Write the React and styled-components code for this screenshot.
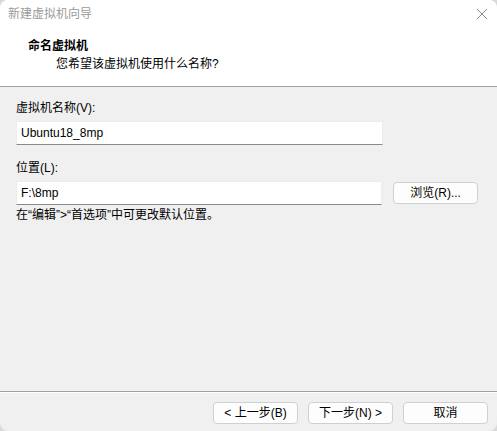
import React from "react";
import styled, { createGlobalStyle } from "styled-components";

const FONT = `"Liberation Sans", "Noto Sans CJK SC", sans-serif`;

const GlobalStyle = createGlobalStyle`
  html, body {
    margin: 0;
    padding: 0;
    background: #d9d9d9;
  }
  * {
    box-sizing: border-box;
  }
`;

const App = () => {
  return (
    <>
      <GlobalStyle />
      <Window>
        <Header>
          <TitleBar>
            <TitleText>新建虚拟机向导</TitleText>
            <CloseButton>
              <svg width="12" height="12" viewBox="0 0 12 12">
                <path d="M1 1 L11 11 M11 1 L1 11" stroke="#8a8a8a" strokeWidth="1" />
              </svg>
            </CloseButton>
          </TitleBar>
          <HeaderContent>
            <StepTitle>命名虚拟机</StepTitle>
            <StepSubtitle>您希望该虚拟机使用什么名称?</StepSubtitle>
          </HeaderContent>
        </Header>
        <Body>
          <Label>虚拟机名称(V):</Label>
          <Field>
            <TextInput defaultValue="Ubuntu18_8mp" />
          </Field>
          <Label $top={15}>位置(L):</Label>
          <Field>
            <TextInput defaultValue="F:\8mp" />
            <Button $width={85}>浏览(R)...</Button>
          </Field>
          <Hint>在“编辑”&gt;“首选项”中可更改默认位置。</Hint>
        </Body>
        <Footer>
          <Button $width={85}>&lt; 上一步(B)</Button>
          <Button $width={85}>下一步(N) &gt;</Button>
          <Button $width={85}>取消</Button>
        </Footer>
      </Window>
    </>
  );
};

export default App;

const Window = styled.div`
  width: 497px;
  height: 431px;
  background: #f0f0f0;
  border-radius: 8px;
  overflow: hidden;
  display: flex;
  flex-direction: column;
  font-family: ${FONT};
  font-size: 12px;
  color: #000;
`;

const Header = styled.div`
  background: #fff;
  height: 87px;
  border-bottom: 1px solid #a0a0a0;
`;

const TitleBar = styled.div`
  height: 30px;
  display: flex;
  align-items: center;
  justify-content: space-between;
  padding: 0 7px 2px 8px;
`;

const TitleText = styled.div`
  color: #9a9a9a;
  font-size: 12px;
  line-height: 16px;
`;

const CloseButton = styled.div`
  width: 16px;
  height: 16px;
  display: flex;
  align-items: center;
  justify-content: center;
`;

const HeaderContent = styled.div`
  padding: 8px 0 0 28px;
`;

const StepTitle = styled.div`
  font-weight: bold;
  font-size: 12px;
  line-height: 16px;
`;

const StepSubtitle = styled.div`
  padding-left: 28px;
  margin-top: 2px;
  line-height: 16px;
`;

const Body = styled.div`
  flex: 1;
  padding: 13px 19px 0 16px;
  display: flex;
  flex-direction: column;
`;

const Label = styled.div`
  line-height: 16px;
  margin-top: ${(p) => p.$top || 0}px;
  margin-bottom: 5px;
`;

const Field = styled.div`
  display: flex;
  align-items: center;
  gap: 11px;
`;

const TextInput = styled.input`
  width: 367px;
  height: 24px;
  border: 1px solid #ececec;
  border-bottom: 1px solid #8a8a8a;
  background: #fff;
  padding: 0 4px;
  font-family: ${FONT};
  font-size: 12px;
  color: #000;
  outline: none;
`;

const Button = styled.button`
  width: ${(p) => p.$width}px;
  height: 22px;
  background: #fdfdfd;
  border: 1px solid #d0d0d0;
  border-radius: 4px;
  font-family: ${FONT};
  font-size: 12px;
  color: #000;
  padding: 0;
  line-height: 18px;
`;

const Hint = styled.div`
  margin-top: 2px;
  line-height: 16px;
`;

const Footer = styled.div`
  height: 40px;
  border-top: 1px solid #a0a0a0;
  box-shadow: inset 0 1px 0 #fff;
  display: flex;
  justify-content: flex-end;
  align-items: flex-start;
  gap: 10px;
  padding: 10px 9px 0 0;
`;
